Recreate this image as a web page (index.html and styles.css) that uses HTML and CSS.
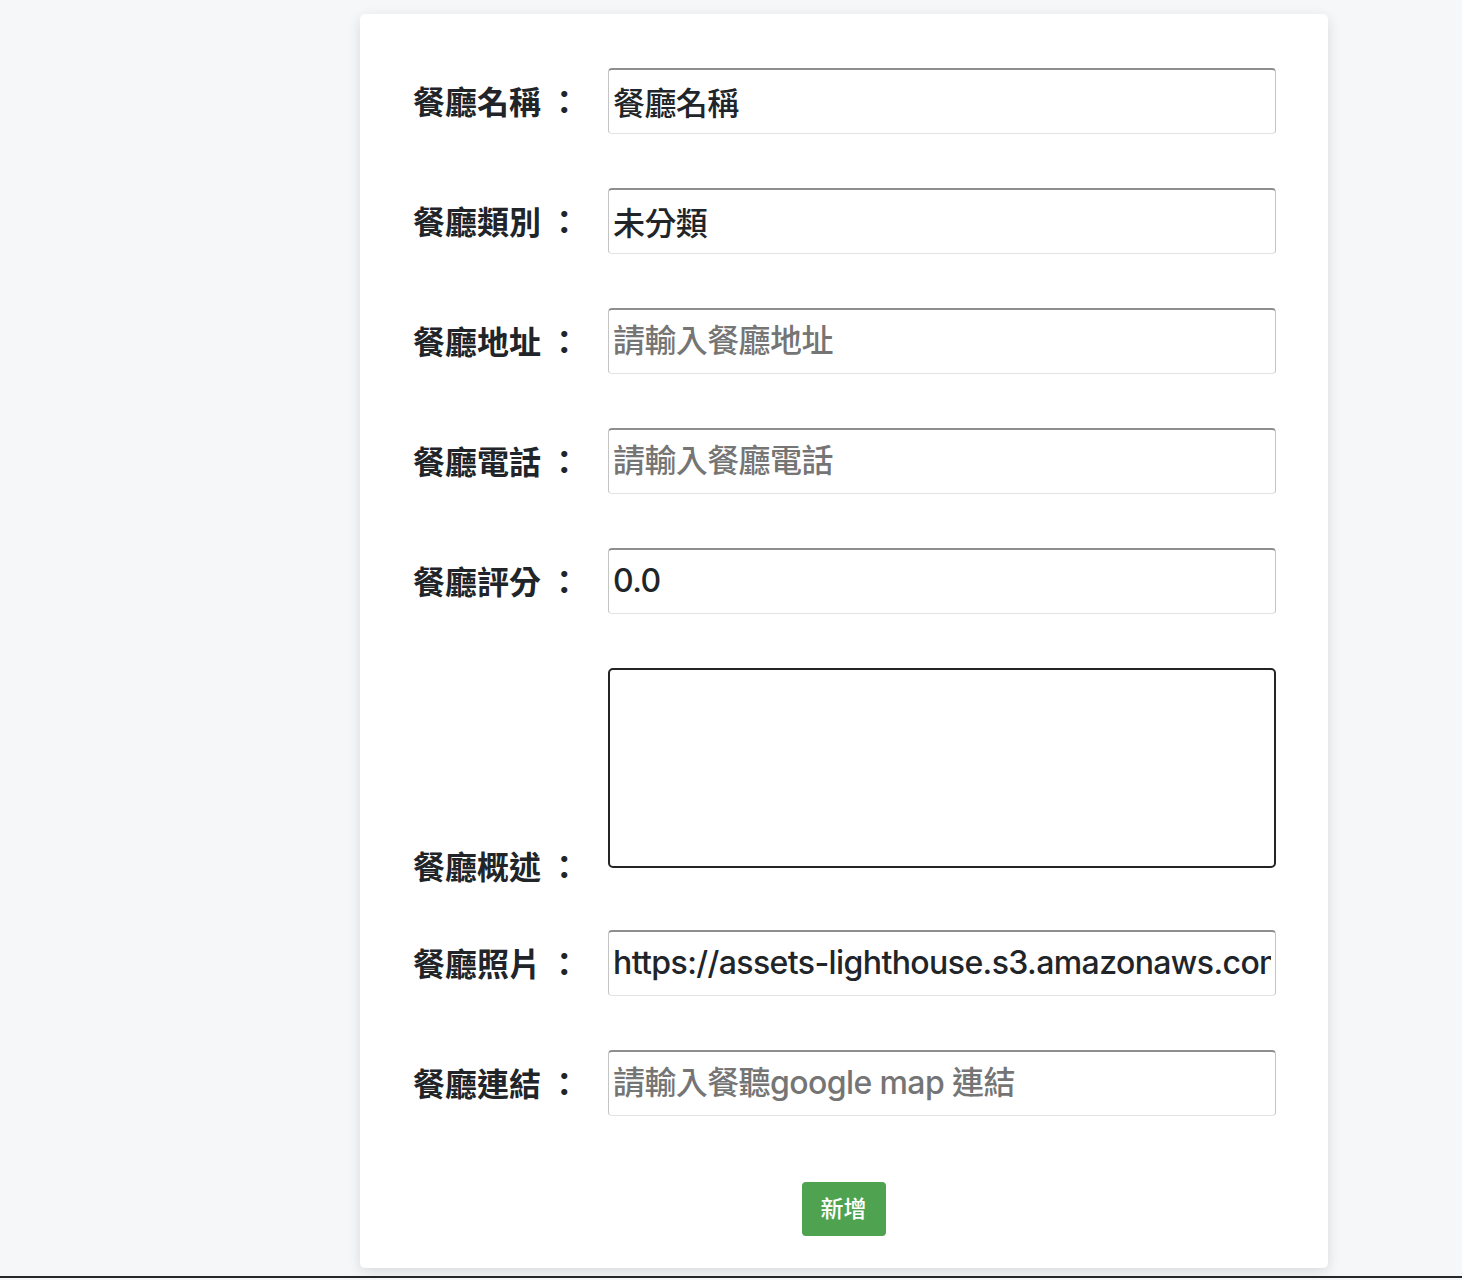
FILE: index.html
```html
<!DOCTYPE html>
<html lang="zh-Hant">
<head>
<meta charset="utf-8">
<title>新增餐廳</title>
<link rel="stylesheet" href="styles.css">
</head>
<body>
<div class="page">
  <form class="card">
    <div class="row">
      <label class="label">餐廳名稱 ：</label>
      <input class="field" type="text" value="餐廳名稱">
    </div>
    <div class="row">
      <label class="label">餐廳類別 ：</label>
      <input class="field" type="text" value="未分類">
    </div>
    <div class="row">
      <label class="label">餐廳地址 ：</label>
      <input class="field" type="text" placeholder="請輸入餐廳地址">
    </div>
    <div class="row">
      <label class="label">餐廳電話 ：</label>
      <input class="field" type="text" placeholder="請輸入餐廳電話">
    </div>
    <div class="row">
      <label class="label">餐廳評分 ：</label>
      <input class="field" type="text" value="0.0">
    </div>
    <div class="row row-area">
      <label class="label label-area">餐廳概述 ：</label>
      <textarea class="area"></textarea>
    </div>
    <div class="row">
      <label class="label">餐廳照片 ：</label>
      <input class="field" type="text" value="https://assets-lighthouse.s3.amazonaws.com/uploads/image/file/5635/01.jpg">
    </div>
    <div class="row">
      <label class="label">餐廳連結 ：</label>
      <input class="field" type="text" placeholder="請輸入餐聽google map 連結">
    </div>
    <div class="actions">
      <button class="btn" type="button">新增</button>
    </div>
  </form>
</div>
</body>
</html>
```

FILE: styles.css
```css
html, body {
  margin: 0;
  padding: 0;
}
body {
  background: #f6f7f9;
  font-family: Inter, "Noto Sans CJK TC", sans-serif;
  color: #212529;
}
.page {
  height: 1278px;
  box-sizing: border-box;
  padding-top: 14px;
  border-bottom: 2px solid #26282b;
}
.card {
  width: 968px;
  height: 1254px;
  box-sizing: border-box;
  margin-left: 360px;
  background: #fff;
  border-radius: 5px;
  box-shadow: 0 4px 14px rgba(0, 0, 0, 0.12);
  padding: 54px 52px 0 53px;
}
.row {
  display: flex;
  align-items: center;
  margin-bottom: 54px;
}
.label {
  width: 195px;
  flex: none;
  font-family: "Noto Sans CJK TC", sans-serif;
  font-weight: 700;
  font-size: 32px;
  line-height: 40px;
  color: #212529;
  white-space: pre;
  position: relative;
  top: -1px;
}
.field {
  width: 668px;
  height: 66px;
  box-sizing: border-box;
  margin: 0;
  padding: 0 4px 2px;
  font-family: Inter, "Noto Sans CJK TC", sans-serif;
  font-weight: 500;
  font-size: 32px;
  letter-spacing: -0.6px;
  color: #212529;
  background: #fff;
  border-style: solid;
  border-width: 2px 1px 1px 1px;
  border-color: #8e8e8e #c4c4c4 #e3e3e3 #c4c4c4;
  border-radius: 4px;
  outline: none;
}
.field::placeholder {
  color: #757575;
}
.row-area {
  align-items: flex-end;
  margin-bottom: 62px;
}
.label-area {
  margin-bottom: -18px;
}
.area {
  width: 668px;
  height: 200px;
  box-sizing: border-box;
  margin: 0;
  border: 2px solid #222426;
  border-radius: 5px;
  resize: none;
  font-size: 32px;
  outline: none;
}
.actions {
  display: flex;
  justify-content: center;
  padding-top: 12px;
  padding-right: 2px;
}
.btn {
  width: 84px;
  height: 54px;
  border: none;
  border-radius: 4px;
  background: #4fa350;
  color: #fff;
  font-family: "Noto Sans CJK TC", sans-serif;
  font-size: 23px;
  font-weight: 500;
  line-height: 50px;
  padding: 0 0 4px;
}
```
